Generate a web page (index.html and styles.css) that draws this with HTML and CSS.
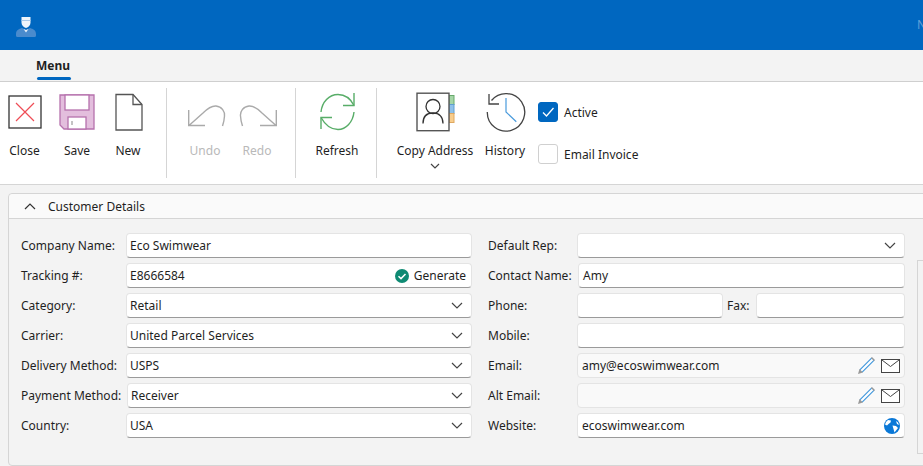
FILE: index.html
```html
<!DOCTYPE html>
<html lang="en">
<head>
<meta charset="utf-8">
<title>Customer Details</title>
<link rel="stylesheet" href="styles.css">
</head>
<body>
<header class="titlebar">
  <svg class="logo" width="24" height="24" viewBox="0 0 24 24"><path d="M2 20c0-4 3-5 6-6l4 2 4-2c3 1 6 2 6 6v1.500a1.500 1.500 0 0 1-1.500 1.500h-17A1.500 1.500 0 0 1 2 21.500z" fill="#4a8bcd"/><path d="M7.500 3h9v5.500c0 3-2 4.500-4.500 5.500-2.500-1-4.500-2.500-4.500-5.500z" fill="#eef4fb"/><path d="M7.500 6h9v1h-9z" fill="#a9c9ea"/><path d="M9.500 15l2.500 1 2.500-1-2.500 3.500z" fill="#e6eff9"/></svg>
  <span class="title-letter">N</span>
</header>
<nav class="tabs"><span class="tab">Menu</span></nav>
<section class="ribbon">
  <div class="tool tool-close">
    <svg width="34" height="34" viewBox="0 0 34 34"><rect x="1" y="1" width="32" height="32" fill="#fff" stroke="#333" stroke-width="1.300"/><path d="M8 8l18 18M26 8L8 26" stroke="#ef4d56" stroke-width="1.200"/></svg>
    <span>Close</span>
  </div>
  <div class="tool tool-save">
    <svg width="36" height="36" viewBox="0 0 36 36"><path d="M1 1h34v34H5l-4-4z" fill="#e3bedd" stroke="#b671ad" stroke-width="1.300"/><rect x="6" y="1" width="24" height="15" fill="#fff" stroke="#b671ad" stroke-width="1.300"/><rect x="9" y="23" width="18" height="12" fill="#fff" stroke="#b671ad" stroke-width="1.300"/><path d="M13 27v4" stroke="#888"/></svg>
    <span>Save</span>
  </div>
  <div class="tool tool-new">
    <svg width="30" height="38" viewBox="0 0 30 38"><path d="M2 1.500h17l9 10v25.500H2z" fill="#fff" stroke="#555" stroke-width="1.300"/><path d="M19 1.500v10h9" fill="none" stroke="#555" stroke-width="1.300"/></svg>
    <span>New</span>
  </div>
  <i class="sep sep-a"></i>
  <div class="tool tool-undo disabled">
    <svg width="38" height="34" viewBox="0 -10 38 34"><path d="M.7 5v15.500H17M1 20.500L15 8C20 3 24 .7 28 1c6 .5 9 6 8.500 10-.2 4-1 7-2 10" fill="none" stroke="#aaa" stroke-width="1.400"/></svg>
    <span>Undo</span>
  </div>
  <div class="tool tool-redo disabled">
    <svg width="38" height="34" viewBox="0 -10 38 34"><path d="M37.300 5v15.500H21M37 20.500L23 8C18 3 14 .7 10 1 4 1.500 1 7 1.500 11c.2 4 1 7 2 10" fill="none" stroke="#aaa" stroke-width="1.400"/></svg>
    <span>Redo</span>
  </div>
  <i class="sep sep-b"></i>
  <div class="tool tool-refresh">
    <svg width="36" height="38" viewBox="0 0 36 38"><g fill="none" stroke="#58ad68" stroke-width="1.400"><path d="M2 19C3 9 10 1.500 19 1.500c6 0 12 3 16 11"/><path d="M35 0v12.500H24"/><path d="M35 19c-1 10-8 17.500-16 17.500-6 0-12-3-17-12"/><path d="M2 36V24.500h11"/></g></svg>
    <span>Refresh</span>
  </div>
  <i class="sep sep-c"></i>
  <div class="tool tool-copy">
    <svg width="39" height="39" viewBox="0 0 39 39"><rect x="33" y="3" width="5" height="9" fill="#a5d6a7" stroke="#67a96b"/><rect x="33" y="12" width="5" height="9" fill="#8fc1ea" stroke="#5f9ed1"/><rect x="33" y="21" width="5" height="9" fill="#f8cd8c" stroke="#dfa860"/><rect x="1" y=".7" width="32" height="37.500" fill="#fff" stroke="#555" stroke-width="1.400"/><circle cx="17" cy="14" r="7" fill="none" stroke="#333" stroke-width="1.300"/><path d="M7 31c0-7 4-10.500 10-10.500S27 24 27 31" fill="none" stroke="#333" stroke-width="1.300"/></svg>
    <span>Copy Address</span>
    <svg class="caret" width="10" height="6" viewBox="0 0 10 6"><path d="M1 1l4 4 4-4" fill="none" stroke="#444" stroke-width="1.200"/></svg>
  </div>
  <div class="tool tool-history">
    <svg width="40" height="40" viewBox="0 0 40 40"><path d="M5.500 8.500A18.700 18.700 0 1 1 1.300 20" fill="none" stroke="#444" stroke-width="1.300"/><path d="M3 2v10h10" fill="none" stroke="#444" stroke-width="1.300"/><path d="M20 6v14l10.300 9.700" fill="none" stroke="#4a9bdc" stroke-width="1.200"/></svg>
    <span>History</span>
  </div>
  <div class="checks">
    <label class="check"><span class="box on"><svg width="20" height="20" viewBox="0 0 20 20"><path d="M5 10.500l3.500 3.500L15.500 6" fill="none" stroke="#fff" stroke-width="1.300"/></svg></span><span class="check-text">Active</span></label>
    <label class="check"><span class="box"></span><span class="check-text">Email Invoice</span></label>
  </div>
</section>
<main class="content">
  <section class="panel">
    <div class="panel-head">
      <svg width="12" height="7" viewBox="0 0 12 7"><path d="M1 6l5-5 5 5" fill="none" stroke="#333" stroke-width="1.200"/></svg>
      <span class="panel-title">Customer Details</span>
    </div>
    <div class="panel-body">
      <div class="col col-left">
        <div class="row"><label>Company Name:</label><div class="field">Eco Swimwear</div></div>
        <div class="row"><label>Tracking #:</label><div class="field">E8666584<span class="generate"><svg width="14" height="14" viewBox="0 0 14 14"><circle cx="7" cy="7" r="7" fill="#0f8a73"/><path d="M3.500 7.200l2.500 2.400 4.500-4.600" fill="none" stroke="#fff" stroke-width="1.500"/></svg>Generate</span></div></div>
        <div class="row"><label>Category:</label><div class="field">Retail<svg class="chev" width="12" height="7" viewBox="0 0 12 7"><path d="M1 1l5 5 5-5" fill="none" stroke="#444" stroke-width="1.200"/></svg></div></div>
        <div class="row"><label>Carrier:</label><div class="field">United Parcel Services<svg class="chev" width="12" height="7" viewBox="0 0 12 7"><path d="M1 1l5 5 5-5" fill="none" stroke="#444" stroke-width="1.200"/></svg></div></div>
        <div class="row"><label>Delivery Method:</label><div class="field">USPS<svg class="chev" width="12" height="7" viewBox="0 0 12 7"><path d="M1 1l5 5 5-5" fill="none" stroke="#444" stroke-width="1.200"/></svg></div></div>
        <div class="row"><label class="label-wide">Payment Method:</label><div class="field">Receiver<svg class="chev" width="12" height="7" viewBox="0 0 12 7"><path d="M1 1l5 5 5-5" fill="none" stroke="#444" stroke-width="1.200"/></svg></div></div>
        <div class="row"><label>Country:</label><div class="field">USA<svg class="chev" width="12" height="7" viewBox="0 0 12 7"><path d="M1 1l5 5 5-5" fill="none" stroke="#444" stroke-width="1.200"/></svg></div></div>
      </div>
      <div class="col col-right">
        <div class="row"><label>Default Rep:</label><div class="field"><svg class="chev" width="12" height="7" viewBox="0 0 12 7"><path d="M1 1l5 5 5-5" fill="none" stroke="#444" stroke-width="1.200"/></svg></div></div>
        <div class="row"><label class="label-wide">Contact Name:</label><div class="field">Amy</div></div>
        <div class="row"><label>Phone:</label><div class="field field-phone"></div><label class="fax">Fax:</label><div class="field"></div></div>
        <div class="row"><label>Mobile:</label><div class="field"></div></div>
        <div class="row"><label>Email:</label><div class="field soft">amy@ecoswimwear.com<span class="icons"><svg width="19" height="19" viewBox="0 0 19 19"><path d="M4 15L16 3" stroke="#3f97dc" stroke-width="4.400"/><path d="M4 15L16 3" stroke="#fff" stroke-width="2.200"/><path d="M14.500 1.500l3 3" stroke="#999" stroke-width="1.500"/><path d="M1 18l1.500-5 3.500 3.500z" fill="#999"/></svg><svg width="19" height="14" viewBox="0 0 19 14"><rect x=".5" y=".5" width="18" height="13" fill="#fff" stroke="#444"/><path d="M1 1l8.500 6.500L18 1" fill="none" stroke="#444"/></svg></span></div></div>
        <div class="row"><label>Alt Email:</label><div class="field soft"><span class="icons"><svg width="19" height="19" viewBox="0 0 19 19"><path d="M4 15L16 3" stroke="#3f97dc" stroke-width="4.400"/><path d="M4 15L16 3" stroke="#fff" stroke-width="2.200"/><path d="M14.500 1.500l3 3" stroke="#999" stroke-width="1.500"/><path d="M1 18l1.500-5 3.500 3.500z" fill="#999"/></svg><svg width="19" height="14" viewBox="0 0 19 14"><rect x=".5" y=".5" width="18" height="13" fill="#fff" stroke="#444"/><path d="M1 1l8.500 6.500L18 1" fill="none" stroke="#444"/></svg></span></div></div>
        <div class="row"><label>Website:</label><div class="field">ecoswimwear.com<span class="icons"><svg class="globe" width="16" height="16" viewBox="0 0 16 16"><circle cx="8" cy="8" r="8" fill="#0a78d7"/><path d="M4 2l3 .5-.5 2L4.500 6 3 7.500 1 6.500 2 4zM8.500 7.500l3.500.5 2 2-2 2.500-1.500 2-1-3.500zM12 3l2 1.500 1 2.500-2-1z" fill="#fff"/></svg></span></div></div>
      </div>
      <aside class="side"></aside>
    </div>
  </section>
</main>
</body>
</html>
```
FILE: styles.css
```css
* { box-sizing: border-box; }
html, body { margin: 0; height: 100%; }
body {
  width: 923px;
  height: 466px;
  overflow: hidden;
  background: #f3f3f3;
  color: #1f1f1f;
  font: 12px/16px "Noto Sans", "Open Sans", sans-serif;
}
.titlebar {
  height: 50px;
  background: #0067c0;
  display: flex;
  align-items: center;
  justify-content: space-between;
  padding: 0 0 0 14px;
}
.title-letter { color: #5f9fd8; margin-right: -3px; }
.logo { margin-top: 1px; }
.tabs {
  height: 32px;
  background: #f3f3f3;
  border-bottom: 1px solid #cfcfcf;
  padding-left: 36px;
}
.tab {
  display: block;
  width: 35px;
  height: 31px;
  padding-top: 8px;
  font-weight: 700;
  position: relative;
}
.tab::after {
  content: "";
  position: absolute;
  left: 1px;
  right: 0;
  bottom: 1px;
  height: 3px;
  border-radius: 2px;
  background: #0067c0;
}
.ribbon {
  height: 103px;
  background: #fff;
  border-bottom: 1px solid #d5d5d5;
  display: flex;
  align-items: flex-start;
}
.tool {
  height: 102px;
  display: flex;
  flex-direction: column;
  align-items: center;
  white-space: nowrap;
  padding-top: 10px;
}
.tool > svg:first-child { height: 40px; }
.tool > span { margin-top: 11px; }
.tool-close { width: 49px; }
.tool-save { width: 56px; }
.tool-new { width: 46px; }
.tool-new > svg:first-child { margin-left: 2px; }
.tool-undo { width: 52px; }
.tool-undo > svg:first-child { margin-left: 4px; }
.tool-redo { width: 52px; }
.tool-redo > svg:first-child { margin-left: 1px; }
.tool-refresh { width: 78px; }
.tool-copy { width: 100px; }
.tool-history { width: 40px; }
.tool-history > svg:first-child { margin-left: 2px; }
.tool .caret { margin-top: 4px; }
.disabled { color: #b9b9b9; }
.sep { width: 1px; height: 90px; margin-top: 6px; background: #d5d5d5; flex: none; }
.sep-a { margin-left: 15px; margin-right: 12px; }
.sep-b { margin-left: 12px; margin-right: 2px; }
.sep-c { margin-right: 8px; }
.checks { display: flex; flex-direction: column; gap: 22px; margin: 20px 0 0 13px; }
.check { display: flex; align-items: center; gap: 6px; white-space: nowrap; }
.check-text { margin-top: 1px; }
.box {
  width: 20px;
  height: 20px;
  border: 1px solid #d0d0d0;
  border-radius: 3px;
  background: #fff;
  display: block;
}
.box.on { background: #0067c0; border-color: #0067c0; }
.box.on svg { display: block; margin: -1px; }
.content { padding: 8px 0 0 8px; }
.panel {
  height: 273px;
  width: 930px;
  border: 1px solid #d5d5d5;
  border-radius: 4px;
}
.panel-head {
  height: 25px;
  background: #fafafa;
  border-bottom: 1px solid #d5d5d5;
  border-radius: 4px 4px 0 0;
  display: flex;
  align-items: center;
  gap: 12px;
  padding-left: 15px;
}
.panel-title { margin-top: 1px; }
.panel-body { display: flex; padding: 14px 0 0 12px; position: relative; }
.col { display: flex; flex-direction: column; gap: 5px; }
.col-left { width: 451px; }
.col-right { width: 417px; margin-left: 16px; }
.row { display: flex; align-items: center; height: 25px; }
.row label { flex: none; white-space: nowrap; }
.col-left label { min-width: 105px; }
.col-left .label-wide { min-width: 106px; }
.col-right label { min-width: 89px; }
.col-right .label-wide { min-width: 90px; }
.col-right .fax { min-width: 0; margin: 0 6px 0 4px; }
.field {
  flex: 1;
  height: 25px;
  min-width: 0;
  background: #fff;
  border: 1px solid #e4e4e4;
  border-bottom: 1px solid #9a9a9a;
  border-radius: 4px;
  display: flex;
  align-items: center;
  padding: 0 4px;
  white-space: nowrap;
}
.col-left .field { padding: 0 3px; }
.field.soft { background: #f9f9f9; border-bottom-color: #e4e4e4; }
.field-phone { flex: none; width: 146px; }
.chev { margin-left: auto; margin-right: 5px; }
.col-right .chev { margin-right: 4px; }
.generate { margin-left: auto; margin-right: 2px; display: flex; align-items: center; gap: 5px; }
.icons { margin-left: auto; display: flex; align-items: center; gap: 5px; }
.globe { margin-right: 0; }
.side {
  position: absolute;
  left: 908px;
  top: 41px;
  width: 20px;
  height: 194px;
  border: 1px solid #d5d5d5;
}
```
